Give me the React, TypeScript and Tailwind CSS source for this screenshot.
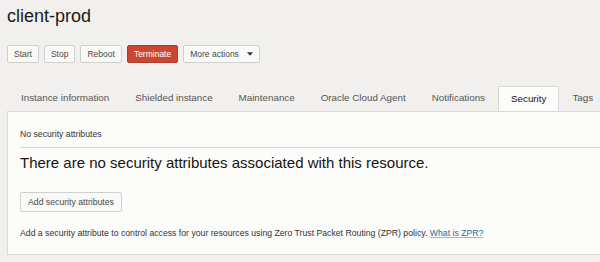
import React from 'react';

const tabs = [
    'Instance information',
    'Shielded instance',
    'Maintenance',
    'Oracle Cloud Agent',
    'Notifications',
    'Security',
    'Tags',
];

const ActionButton: React.FC<{ label: string; danger?: boolean; children?: React.ReactNode }> = ({ label, danger, children }) => (
    <button
        className={
            danger
                ? 'h-[18px] px-[6px] flex items-center gap-[6px] rounded-[2px] border border-[#b33a2a] bg-[#c74634] text-white text-[8.5px]'
                : 'h-[18px] px-[6px] flex items-center gap-[6px] rounded-[2px] border border-[#cfcfcd] bg-[#f9f9f8] text-[#4a4a4a] text-[8.5px]'
        }
    >
        {label}
        {children}
    </button>
);

export default function App() {
    return (
        <div
            className="w-[600px] h-[262px] overflow-hidden bg-[#f1f0ee] text-[#161513]"
            style={{ fontFamily: '"Liberation Sans", Arial, sans-serif' }}
        >
            {/* Header */}
            <h1 className="pl-[7px] pt-[4px] text-[18px] leading-[24px] text-[#1a1a1a]">client-prod</h1>

            {/* Actions */}
            <div className="flex gap-[5px] pl-[7px] mt-[17px]">
                <ActionButton label="Start" />
                <ActionButton label="Stop" />
                <ActionButton label="Reboot" />
                <ActionButton label="Terminate" danger />
                <ActionButton label="More actions">
                    <svg width="6" height="4" viewBox="0 0 7 4" className="ml-[2px]">
                        <path d="M0 0h7L3.5 4z" fill="#333" />
                    </svg>
                </ActionButton>
            </div>

            {/* Tabs */}
            <div className="flex pl-[8px] mt-[23px] relative z-10">
                {tabs.map((tab) => (
                    <div
                        key={tab}
                        className={
                            tab === 'Security'
                                ? 'h-[25px] px-[12px] flex items-center text-[9.8px] text-[#161513] bg-[#fcfcfb] border border-b-0 border-[#d9d9d7] mb-[-1px] whitespace-nowrap'
                                : 'h-[25px] px-[12px] flex items-center text-[9.8px] text-[#555] border border-transparent whitespace-nowrap'
                        }
                    >
                        {tab}
                    </div>
                ))}
            </div>

            {/* Panel */}
            <div className="ml-[7px] w-[620px] h-[144px] border border-[#d9d9d7] bg-[#fcfcfb] pl-[12px]">
                <div className="pt-[16px] pb-[6px] text-[8.7px] text-[#333] border-b border-[#d4d4d2]">No security attributes</div>
                <h2 className="mt-[6px] text-[15px] leading-[18px] text-[#161513]">
                    There are no security attributes associated with this resource.
                </h2>
                <button className="mt-[20px] h-[20px] px-[7px] rounded-[2px] border border-[#cfcfcd] bg-[#f9f9f8] text-[8.7px] text-[#4a4a4a]">
                    Add security attributes
                </button>
                <p className="mt-[15px] text-[8.7px] text-[#333]">
                    Add a security attribute to control access for your resources using Zero Trust Packet Routing (ZPR) policy.{' '}
                    <a className="text-[#2f6b91] underline decoration-[#9bb8cc]">What is ZPR?</a>
                </p>
            </div>
        </div>
    );
}
